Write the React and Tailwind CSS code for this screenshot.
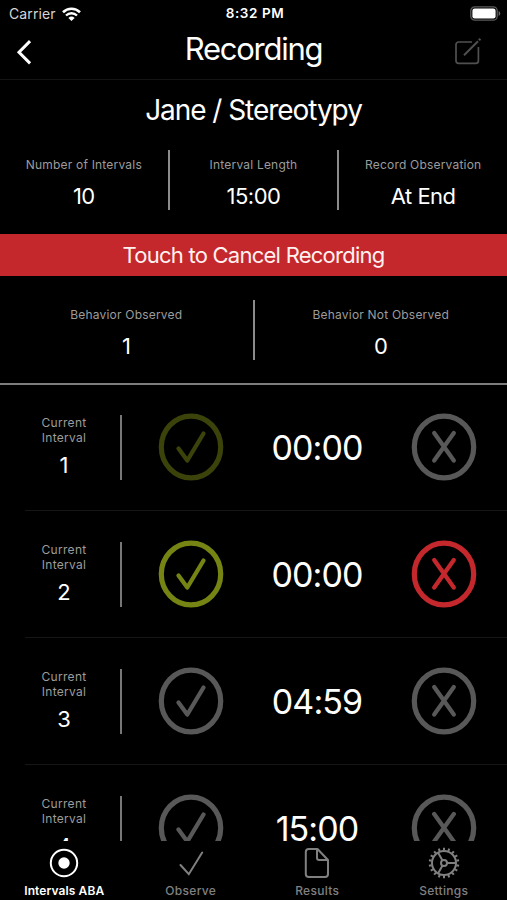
const intervals = [
  { number: 1, time: "00:00", check: "#3b420a", cross: "#585858" },
  { number: 2, time: "00:00", check: "#758412", cross: "#c4282d" },
  { number: 3, time: "04:59", check: "#585858", cross: "#585858" },
  { number: 4, time: "15:00", check: "#585858", cross: "#585858" },
];

const tabs = [
  { label: "Intervals ABA", icon: TargetIcon, active: true },
  { label: "Observe", icon: CheckIcon },
  { label: "Results", icon: FileIcon },
  { label: "Settings", icon: GearIcon },
];

export default function App() {
  return (
    <div className="flex h-[900px] w-[507px] flex-col overflow-hidden bg-black font-['Inter','Liberation_Sans',sans-serif] text-white">
      <StatusBar />
      <NavBar />

      <h2 className="mt-3 h-9 text-center text-[28px] leading-9 tracking-[-1.05px]">
        Jane / Stereotypy
      </h2>

      <section className="mt-[22px] flex h-[61px]">
        <Stat label="Number of Intervals" value="10" />
        <Divider />
        <Stat label="Interval Length" value="15:00" />
        <Divider />
        <Stat label="Record Observation" value="At End" />
      </section>

      <button className="mt-[24px] h-[42px] shrink-0 bg-[#c4282d] text-[22px] leading-[42px] tracking-[-0.75px] text-[#fff1ef]">
        Touch to Cancel Recording
      </button>

      <section className="mt-6 flex h-[60px] shrink-0">
        <Stat label="Behavior Observed" value="1" />
        <Divider />
        <Stat label="Behavior Not Observed" value="0" />
      </section>

      <main className="mt-[23px] h-[458px] shrink-0 overflow-hidden border-t-2 border-[#7d7d7d]">
        {intervals.map((interval) => (
          <IntervalRow key={interval.number} {...interval} />
        ))}
      </main>

      <TabBar />
    </div>
  );
}

function StatusBar() {
  return (
    <header className="grid h-[27px] shrink-0 grid-cols-3 items-center pr-[6px] pl-[9px]">
      <div className="flex items-center gap-[6px]">
        <span className="text-[14px] tracking-[0.1px] text-[#d5d5d5]">Carrier</span>
        <svg width="19" height="14" viewBox="0 0 19 14" fill="none" stroke="#fff">
          <path d="M1 5.2a12.2 12.2 0 0 1 17 0" strokeWidth="2.6" />
          <path d="M4 8.5a8 8 0 0 1 11 0" strokeWidth="2.4" />
          <path d="M9.5 14 6.4 10.9a4.5 4.5 0 0 1 6.2 0z" fill="#fff" stroke="none" />
        </svg>
      </div>

      <span className="text-center text-[13.5px] font-semibold tracking-[0.6px]">
        8:32 PM
      </span>

      <svg className="justify-self-end" width="31" height="15" viewBox="0 0 31 15">
        <rect x="0.8" y="0.8" width="26.4" height="13.4" rx="4" fill="none" stroke="#5c5c5c" strokeWidth="1.3" />
        <rect x="2.4" y="2.4" width="23.2" height="10.2" rx="2.3" fill="#fff" />
        <path d="M28.6 5v5c2.2-1 2.2-4 0-5z" fill="#6a6a6a" />
      </svg>
    </header>
  );
}

function NavBar() {
  return (
    <nav className="grid h-[53px] shrink-0 grid-cols-[1fr_auto_1fr] border-b border-[#141414]">
      <svg className="mt-[13px] ml-[16px]" width="16" height="25" viewBox="0 0 16 25">
        <path d="M13 2.2 3 12.3l10 10" fill="none" stroke="#fff" strokeWidth="3" strokeLinecap="square" />
      </svg>

      <h1 className="h-11 text-[31px] leading-[44px] tracking-[-1.25px]">Recording</h1>

      <svg
        className="mt-[10px] mr-[25px] justify-self-end"
        width="28"
        height="28"
        viewBox="0 0 28 28"
        fill="none"
        stroke="#505050"
        strokeWidth="1.7"
      >
        <path d="M18 5H4.6A2.6 2.6 0 0 0 2 7.6v16.2a2.6 2.6 0 0 0 2.6 2.6h17.2a2.6 2.6 0 0 0 2.6-2.6V10" />
        <path d="M10 18.3 24 4.2" strokeWidth="2" />
        <path d="m25 3.2 1.3-1.400" strokeWidth="2.400" />
      </svg>
    </nav>
  );
}

function Stat({ label, value }) {
  return (
    <div className="flex flex-1 flex-col items-center">
      <span className="mt-[6px] text-[12px] leading-[18px] tracking-[0.2px] whitespace-nowrap text-[#9c9c9c]">
        {label}
      </span>
      <span className="mt-[8px] text-[22px] leading-7 tracking-[-0.5px]">{value}</span>
    </div>
  );
}

function Divider() {
  return <div className="w-[2px] shrink-0 bg-[#8c8c8c]" />;
}

function IntervalRow({ number, time, check, cross }) {
  return (
    <div className="h-[127px]">
      <div className="grid h-[125px] grid-cols-[120px_2px_138px_114px_133px] items-center">
        <div className="flex flex-col items-center pl-2 text-center">
          <p className="w-16 text-[12px] leading-[14.5px] tracking-[0.3px] text-[#9c9c9c]">
            Current Interval
          </p>
          <span className="mt-[6px] text-[22px] leading-7">{number}</span>
        </div>

        <div className="h-[65px] bg-[#777]" />

        <RoundIcon color={check}>
          <path d="m20.5 35.5 8.8 12L45.500 20.500" />
        </RoundIcon>

        <span className="text-center text-[34px] leading-10 tracking-[-0.9px] whitespace-nowrap">
          {time}
        </span>

        <RoundIcon color={cross} className="ml-[7px]">
          <path d="m23.2 20 19.600 27.500M42.800 20l-19.600 27.500" />
        </RoundIcon>
      </div>
      <div className="ml-[25px] h-px bg-[#161616]" />
    </div>
  );
}

function RoundIcon({ color, className = "", children }) {
  return (
    <svg
      className={`-mt-px justify-self-center ${className}`}
      width="66"
      height="68"
      viewBox="0 0 66 68"
      fill="none"
      stroke={color}
      strokeLinecap="round"
      strokeLinejoin="round"
    >
      <ellipse cx="33" cy="34" rx="29.700" ry="30.900" strokeWidth="5.200" />
      <g strokeWidth="4.300">{children}</g>
    </svg>
  );
}

function TabBar() {
  return (
    <footer className="grid h-[59px] shrink-0 grid-cols-4 pl-px">
      {tabs.map(({ label, icon: Icon, active }) => (
        <button
          key={label}
          className={`flex flex-col items-center pt-[6px] ${
            active ? "text-white" : "text-[#808080]"
          }`}
        >
          <Icon />
          <span
            className={`mt-[3px] text-[12px] leading-[18px] whitespace-nowrap ${
              active ? "font-semibold tracking-[0.1px]" : "font-medium tracking-[0.3px]"
            }`}
          >
            {label}
          </span>
        </button>
      ))}
    </footer>
  );
}

function TargetIcon() {
  return (
    <svg width="32" height="32" viewBox="0 0 32 32">
      <circle cx="16" cy="16" r="13.200" fill="none" stroke="currentColor" strokeWidth="2" />
      <circle cx="16" cy="16" r="5.700" fill="currentColor" />
    </svg>
  );
}

function CheckIcon() {
  return (
    <svg width="32" height="32" viewBox="0 0 32 32" fill="none" stroke="currentColor" strokeWidth="2" strokeLinecap="round">
      <path d="m5.500 18 8.300 9.200L27.200 5.500" />
    </svg>
  );
}

function FileIcon() {
  return (
    <svg width="32" height="32" viewBox="0 0 32 32" fill="none" stroke="currentColor" strokeWidth="2" strokeLinejoin="round">
      <path d="M7.800 2h8.700l10.500 11v14a3 3 0 0 1-3 3H7.800a3 3 0 0 1-3-3V5a3 3 0 0 1 3-3z" />
      <path d="M16 2v8.700a2.300 2.300 0 0 0 2.300 2.300H27" />
    </svg>
  );
}

function GearIcon() {
  const teeth = Array.from({ length: 18 }, (_, i) => i * 20);

  return (
    <svg width="32" height="32" viewBox="0 0 32 32" fill="none" stroke="currentColor" strokeWidth="2">
      <circle cx="16" cy="16" r="12" />
      <circle cx="16" cy="16" r="3" />
      {teeth.map((angle) => (
        <path key={angle} d="M16 3.500V.700" transform={`rotate(${angle} 16 16)`} />
      ))}
      <path d="M19 16h9M14.500 13.400 10 5.600M14.500 18.600 10 26.400" />
    </svg>
  );
}
